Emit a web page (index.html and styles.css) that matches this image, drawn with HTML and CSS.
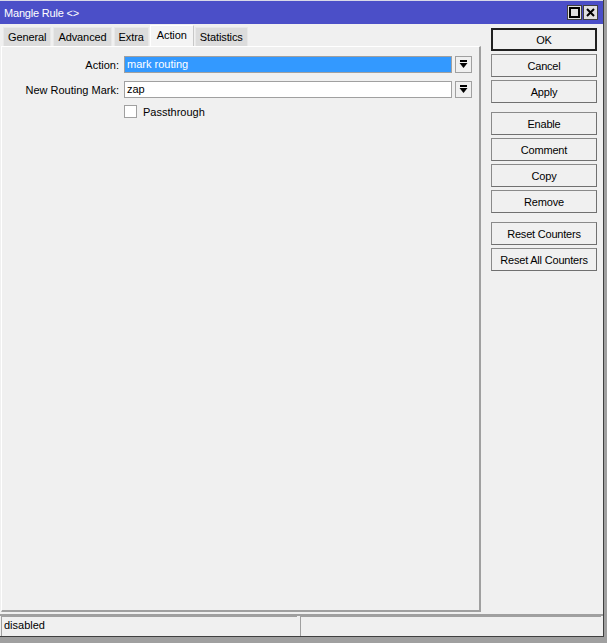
FILE: index.html
```html
<!DOCTYPE html>
<html>
<head>
  <title>Mangle Rule</title>
  <link rel="stylesheet" href="styles.css">
</head>
<body>
  <div class="window">
    <div class="titlebar">
      <span class="title">Mangle Rule &lt;&gt;</span>
      <div class="win-buttons">
        <span class="win-btn">
          <svg width="11" height="11" viewBox="0 0 11 11"><rect x="1" y="1" width="9" height="9" fill="none" stroke="#000" stroke-width="2"/></svg>
        </span>
        <span class="win-btn">
          <svg width="11" height="11" viewBox="0 0 11 11"><path d="M2 2 L9 9 M9 2 L2 9" stroke="#000" stroke-width="2"/></svg>
        </span>
      </div>
    </div>

    <div class="main">
      <div class="left">
        <div class="tabs">
          <span class="tab">General</span>
          <span class="tab">Advanced</span>
          <span class="tab">Extra</span>
          <span class="tab active">Action</span>
          <span class="tab">Statistics</span>
        </div>
        <div class="panel">
          <div class="row">
            <label class="lbl">Action:</label>
            <div class="field selected">mark routing</div>
            <span class="drop">
              <svg width="9" height="9" viewBox="0 0 9 9"><rect x="1" y="0" width="7" height="2" fill="#000"/><path d="M0.5 3 H8.5 L4.5 8 Z" fill="#000"/></svg>
            </span>
          </div>
          <div class="row">
            <label class="lbl">New Routing Mark:</label>
            <div class="field">zap</div>
            <span class="drop">
              <svg width="9" height="9" viewBox="0 0 9 9"><rect x="1" y="0" width="7" height="2" fill="#000"/><path d="M0.5 3 H8.5 L4.5 8 Z" fill="#000"/></svg>
            </span>
          </div>
          <div class="check-row">
            <span class="checkbox"></span>
            <span>Passthrough</span>
          </div>
        </div>
      </div>

      <div class="buttons">
        <button class="btn default">OK</button>
        <button class="btn">Cancel</button>
        <button class="btn">Apply</button>
        <div class="sep"></div>
        <button class="btn">Enable</button>
        <button class="btn">Comment</button>
        <button class="btn">Copy</button>
        <button class="btn">Remove</button>
        <div class="sep"></div>
        <button class="btn">Reset Counters</button>
        <button class="btn">Reset All Counters</button>
      </div>
    </div>

    <div class="statusbar">
      <div class="cell first">disabled</div>
      <div class="cell second"></div>
    </div>
  </div>
</body>
</html>
```

FILE: styles.css
```css
body {
  margin: 0;
  background: #a0a0a0;
  font-family: "Liberation Sans", Arial, sans-serif;
  font-size: 11px;
  color: #000;
}

.window {
  width: 603px;
  height: 636px;
  background: #f0f0f0;
  border-right: 1px solid #404040;
  border-bottom: 1px solid #404040;
  display: flex;
  flex-direction: column;
}

.titlebar {
  height: 23px;
  border-top: 1px solid #d8d8e8;
  background: #4b4fc8;
  color: #fff;
  display: flex;
  align-items: center;
  padding-left: 4px;
  padding-right: 5px;
  font-size: 11px;
}

.title {
  flex: 1;
  margin-top: 1px;
  letter-spacing: -0.2px;
}

.win-buttons {
  display: flex;
  gap: 1px;
}

.win-btn {
  width: 13px;
  height: 13px;
  background: #e0e0e0;
  border: 1px solid #404040;
  display: flex;
  align-items: center;
  justify-content: center;
}

.main {
  flex: 1;
  display: flex;
}

.left {
  width: 480px;
  display: flex;
  flex-direction: column;
  padding-left: 1px;
  padding-top: 2px;
}

.tabs {
  display: flex;
  align-items: flex-end;
  gap: 2px;
  padding-left: 2px;
  height: 20px;
}

.tab {
  height: 19px;
  line-height: 19px;
  padding: 0 4px;
  background: #dcdcdc;
  border: 1px solid #e8e8e8;
  border-bottom: none;
  box-sizing: border-box;
  letter-spacing: -0.1px;
}

.tab.active {
  height: 21px;
  line-height: 19px;
  padding: 0 6px;
  margin: 0 -1px;
  background: #f4f4f4;
  border-color: #ffffff;
  border-right-color: #c8c8c8;
}

.panel {
  flex: 1;
  border-top: 1px solid #ffffff;
  border-left: 1px solid #ffffff;
  border-right: 2px solid #a0a0a0;
  border-bottom: 2px solid #a0a0a0;
  padding-top: 9px;
}

.row {
  display: flex;
  align-items: center;
  height: 17px;
  margin-bottom: 8px;
}

.lbl {
  width: 117px;
  text-align: right;
  padding-right: 5px;
}

.field {
  width: 328px;
  height: 17px;
  line-height: 15px;
  box-sizing: border-box;
  border: 1px solid #a0a0a0;
  background: #fff;
  padding-left: 2px;
}

.field.selected {
  background: #3399ff;
  color: #fff;
}

.drop {
  width: 17px;
  height: 17px;
  margin-left: 3px;
  box-sizing: border-box;
  border: 1px solid #a0a0a0;
  background: #f0f0f0;
  display: flex;
  align-items: center;
  justify-content: center;
}

.check-row {
  display: flex;
  align-items: center;
  margin-left: 122px;
  margin-top: -1px;
  gap: 6px;
}

.checkbox {
  width: 11px;
  height: 11px;
  border: 1px solid #a0a0a0;
  background: #fff;
}

.buttons {
  margin-left: 10px;
  padding-top: 4px;
  display: flex;
  flex-direction: column;
  gap: 3px;
}

.btn {
  width: 106px;
  height: 23px;
  margin: 0;
  padding: 0;
  background: #f0f0f0;
  border: 1px solid #8a8a8a;
  border-right-color: #707070;
  border-bottom-color: #707070;
  font-family: "Liberation Sans", Arial, sans-serif;
  font-size: 11px;
  letter-spacing: -0.2px;
  color: #000;
}

.btn.default {
  border: 2px solid #202020;
}

.sep {
  height: 3px;
}

.statusbar {
  height: 20px;
  border-top: 2px solid #a0a0a0;
  margin-top: 2px;
  display: flex;
  gap: 3px;
  padding: 0 2px 0 1px;
}

.cell {
  height: 19px;
  line-height: 16px;
  border-top: 1px solid #a0a0a0;
  border-left: 1px solid #a0a0a0;
  padding-left: 2px;
}

.cell.first {
  width: 293px;
}

.cell.second {
  flex: 1;
}
```
